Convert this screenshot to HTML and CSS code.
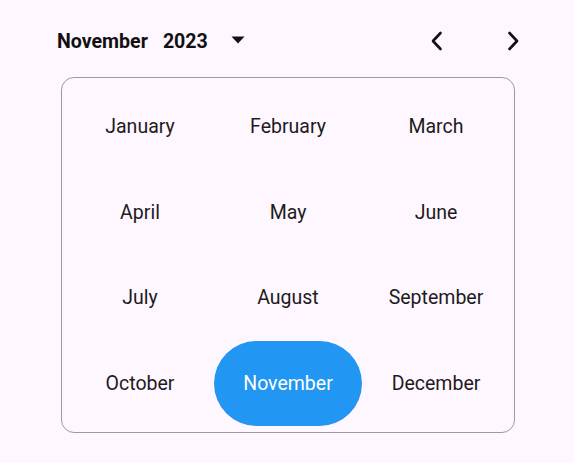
FILE: index.html
```html
<!DOCTYPE html>
<html>
<head>
<meta charset="utf-8">
<link rel="stylesheet" href="styles.css">
</head>
<body>
<div class="picker">
  <div class="header">
    <div class="title">
      <span class="month">November</span>
      <span class="year">2023</span>
      <svg class="drop" width="14" height="8" viewBox="0 0 14 8"><path d="M0.5 0.5 H13.5 L7 7.5 Z" fill="#111"/></svg>
    </div>
    <div class="navs">
      <svg class="nav" width="24" height="24" viewBox="0 0 24 24"><path d="M15.5 4 L8 12 L15.5 20" fill="none" stroke="#111" stroke-width="2.6" stroke-linecap="round" stroke-linejoin="round"/></svg>
      <svg class="nav" width="24" height="24" viewBox="0 0 24 24"><path d="M8.5 4 L16 12 L8.5 20" fill="none" stroke="#111" stroke-width="2.6" stroke-linecap="round" stroke-linejoin="round"/></svg>
    </div>
  </div>
  <div class="grid">
    <div class="cell">January</div>
    <div class="cell">February</div>
    <div class="cell">March</div>
    <div class="cell">April</div>
    <div class="cell">May</div>
    <div class="cell">June</div>
    <div class="cell">July</div>
    <div class="cell">August</div>
    <div class="cell">September</div>
    <div class="cell">October</div>
    <div class="cell selected">November</div>
    <div class="cell">December</div>
  </div>
</div>
</body>
</html>
```
FILE: styles.css
```css
html, body {
  margin: 0;
  padding: 0;
  background: #fef7ff;
}
body {
  font-family: Roboto, "Noto Sans", sans-serif;
  color: #1d1b20;
}
.picker {
  width: 454px;
  margin: 0 0 0 61px;
  padding-top: 21px;
}
.header {
  display: flex;
  align-items: center;
  justify-content: space-between;
  height: 40px;
  margin-left: -4px;
  margin-bottom: 16px;
  margin-right: -10px;
}
.title {
  display: flex;
  align-items: center;
  font-weight: 700;
  font-size: 19.6px;
  color: #111;
}
.year {
  margin-left: 15px;
}
.drop {
  margin-left: 23px;
  margin-top: -2px;
}
.navs {
  display: flex;
  gap: 52px;
}
.nav {
  display: block;
}
.grid {
  box-sizing: border-box;
  width: 454px;
  height: 356px;
  border: 1px solid #9e9a9f;
  border-radius: 13px;
  padding: 6px 4px;
  display: grid;
  grid-template-columns: repeat(3, 148px);
  grid-template-rows: repeat(4, 85.5px);
}
.cell {
  display: flex;
  align-items: center;
  justify-content: center;
  font-size: 19.5px;
  color: #1d1b20;
  border-radius: 43px;
}
.cell.selected {
  background: #2196f3;
  color: #ffffff;
}
```
